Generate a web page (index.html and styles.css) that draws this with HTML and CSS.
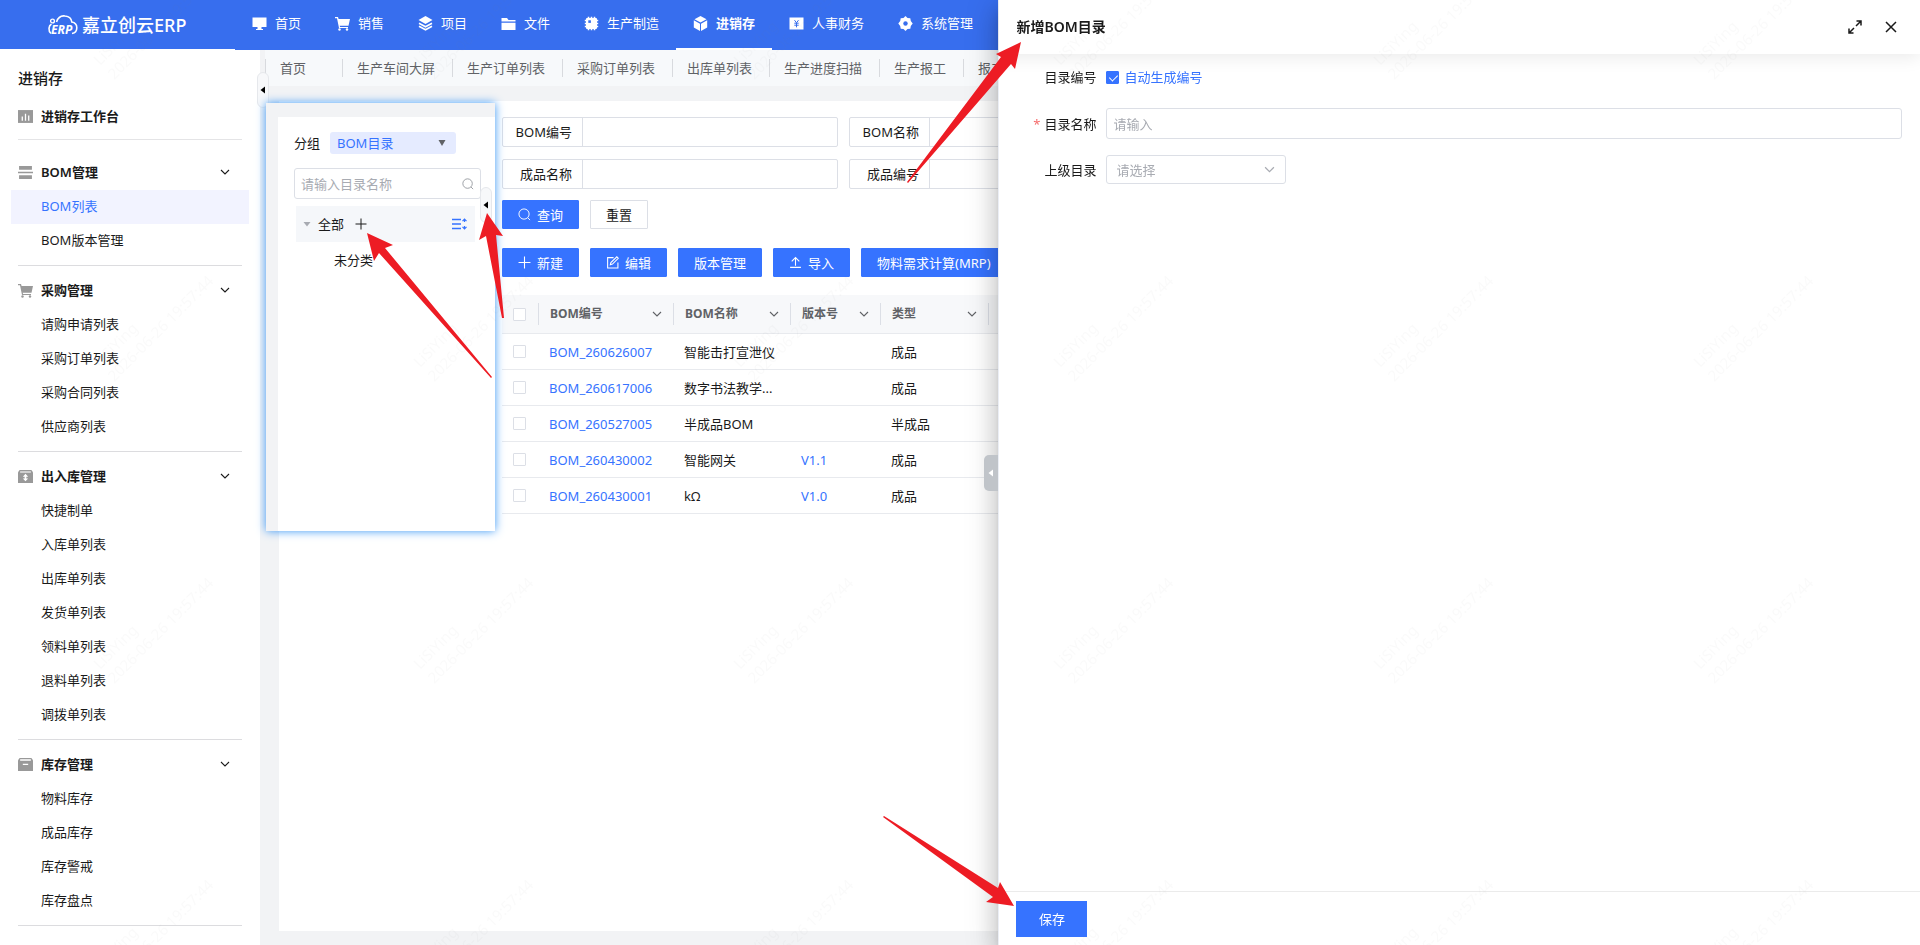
FILE: index.html
```html
<!DOCTYPE html>
<html lang="zh-CN">
<head>
    <meta charset="UTF-8">
    <meta name="viewport" content="width=device-width, initial-scale=1.0">
    <title>嘉立创云ERP</title>
    <link rel="stylesheet" href="styles.css">
</head>
<body>
<svg class="sprite" aria-hidden="true">
    <symbol id="i-down" viewBox="0 0 10 10"><path d="M1 3l4 4 4-4" fill="none" stroke="currentColor" stroke-width="1.1"/></symbol>
    <symbol id="i-search" viewBox="0 0 14 14"><circle cx="6.5" cy="6.5" r="5.5" fill="none" stroke="currentColor"/><path d="M10.500 10.500l2.500 2.500" stroke="currentColor"/></symbol>
    <symbol id="i-cart" viewBox="0 0 15 15"><path d="M0 1h3l.6 2H15l-1.500 6.800H4.700l.4 1.200H13v1H4L2 2.200H0z" fill="currentColor"/><circle cx="4.500" cy="13.500" r="1.200" fill="currentColor"/><circle cx="12" cy="13.500" r="1.200" fill="currentColor"/></symbol>
    <symbol id="i-left" viewBox="0 0 6 8"><path d="M5 0.500v7L0.500 4z" fill="currentColor"/></symbol>
</svg>

<header class="header">
    <div class="brand">
        <svg class="brand-logo" width="30" height="22" viewBox="0 0 30 22" aria-hidden="true">
            <path d="M3 19.500C0 17 .5 11.500 3.500 10M8.500 8C10 3.500 13.500 1.500 17 2c4 .4 6.500 3 6.800 6 3.200.6 5 3 5 5.700 0 3-2 5.300-4.800 5.800" fill="none" stroke="#fff" stroke-width="1.600"/>
            <circle cx="4.500" cy="7" r="1.900" fill="none" stroke="#fff" stroke-width="1.400"/>
            <text x="3" y="20" font-size="12" font-weight="700" font-style="italic" fill="#fff">ERP</text>
        </svg>
        <span class="brand-name">嘉立创云ERP</span>
    </div>
    <nav class="nav">
        <a href="#"><svg viewBox="0 0 15 15"><path d="M.5 1.500h14V11H.5zM5.500 11h4v2h1.500v1H4v-1h1.500z" fill="currentColor"/></svg>首页</a>
        <a href="#"><svg viewBox="0 0 15 15"><use href="#i-cart"/></svg>销售</a>
        <a href="#"><svg viewBox="0 0 15 15"><path d="M7.500 0l7 4-7 4-7-4z" fill="currentColor"/><path d="M1 7.200l6.500 3.600L14 7.200M1 10.200l6.500 3.600 6.500-3.600" fill="none" stroke="currentColor" stroke-width="1.600"/></svg>项目</a>
        <a href="#"><svg viewBox="0 0 15 15"><path d="M.5 2h5.500l1.500 2h7v1.500H.5zM.5 6.800h14V14H.5z" fill="currentColor"/></svg>文件</a>
        <a href="#"><svg viewBox="0 0 15 15"><rect x="2" y="2" width="11" height="11" rx="1" fill="currentColor"/><path d="M4.500 .8v13.400M7.500 .8v13.400M10.500 .8v13.400M.8 4.500h13.400M.8 7.500h13.400M.8 10.500h13.400" stroke="currentColor" stroke-width="1.600"/><rect x="4.300" y="4.300" width="2.600" height="2.600" fill="#376eee"/></svg>生产制造</a>
        <a href="#" class="active"><svg viewBox="0 0 15 15"><path d="M7.500 0l6 3.200-6 3.300-6-3.300zM.8 4.300L7 7.700V15L.8 11.600zM14.200 4.300L8 7.700V15l6.200-3.400z" fill="currentColor"/></svg>进销存</a>
        <a href="#"><svg viewBox="0 0 15 15"><rect x=".5" y="1.500" width="14" height="12" fill="currentColor"/><path d="M5.500 4.200l2 2.600 2-2.600M5.300 7.200h4.400M5.300 9.200h4.400M7.500 6.800v4.500" fill="none" stroke="#376eee"/></svg>人事财务</a>
        <a href="#"><svg viewBox="0 0 15 15"><path d="M7.500 0l2 2 2.800.2.500 2.800 1.900 2.500-1.900 2.500-.5 2.800-2.800.2-2 2-2-2-2.800-.2L2.200 10 .3 7.500 2.200 5l.5-2.800L5.500 2z" fill="currentColor"/><circle cx="7.500" cy="7.500" r="2.200" fill="#376eee"/></svg>系统管理</a>
    </nav>
</header>

<div class="layout">
    <aside class="sidebar">
        <h2>进销存</h2>
        <a href="#" class="workbench">
            <svg class="menu-icon" viewBox="0 0 14 14"><rect y="1" width="14" height="12" fill="currentColor"/><path d="M4 7v4M7 4.500V11M10 6v5" stroke="#fff" stroke-width="1.200"/></svg>进销存工作台
        </a>
        <section class="menu-group first">
            <button class="menu-title"><svg class="menu-icon" viewBox="0 0 14 14"><path d="M1 1h12v3.500H1zM0 6.300h14v1.400H0zM1 9.500h12V13H1z" fill="currentColor"/></svg>BOM管理<svg class="chevron"><use href="#i-down"/></svg></button>
            <a href="#" class="active">BOM列表</a>
            <a href="#">BOM版本管理</a>
        </section>
        <section class="menu-group">
            <button class="menu-title"><svg class="menu-icon"><use href="#i-cart"/></svg>采购管理<svg class="chevron"><use href="#i-down"/></svg></button>
            <a href="#">请购申请列表</a>
            <a href="#">采购订单列表</a>
            <a href="#">采购合同列表</a>
            <a href="#">供应商列表</a>
        </section>
        <section class="menu-group">
            <button class="menu-title"><svg class="menu-icon" viewBox="0 0 14 14"><path d="M1.500 1h11L14 3v10H0V3z" fill="currentColor"/><path d="M2 2.800h10" stroke="#fff"/><path d="M7 4.500l2.500 2.700h-1.700v1.600h1.700L7 11.500 4.500 8.800h1.700V7.200H4.500z" fill="#fff"/></svg>出入库管理<svg class="chevron"><use href="#i-down"/></svg></button>
            <a href="#">快捷制单</a>
            <a href="#">入库单列表</a>
            <a href="#">出库单列表</a>
            <a href="#">发货单列表</a>
            <a href="#">领料单列表</a>
            <a href="#">退料单列表</a>
            <a href="#">调拨单列表</a>
        </section>
        <section class="menu-group">
            <button class="menu-title"><svg class="menu-icon" viewBox="0 0 14 14"><path d="M1.500 1h11L14 3v10H0V3z" fill="currentColor"/><path d="M2 2.800h10M4.500 6.800h5" stroke="#fff" stroke-width="1.200"/></svg>库存管理<svg class="chevron"><use href="#i-down"/></svg></button>
            <a href="#">物料库存</a>
            <a href="#">成品库存</a>
            <a href="#">库存警戒</a>
            <a href="#">库存盘点</a>
        </section>
    </aside>

    <div class="page">
        <button class="handle sidebar-handle" aria-label="收起菜单"><svg><use href="#i-left"/></svg></button>
        <nav class="tabs">
            <a href="#" class="home">首页</a>
            <a href="#">生产车间大屏</a>
            <a href="#">生产订单列表</a>
            <a href="#">采购订单列表</a>
            <a href="#">出库单列表</a>
            <a href="#">生产进度扫描</a>
            <a href="#">生产报工</a>
            <a href="#">报工列表</a>
        </nav>
        <main class="card">
            <form class="filters">
                <label class="filter"><span>BOM编号</span><input type="text"></label>
                <label class="filter"><span>BOM名称</span><input type="text"></label>
                <label class="filter second-row"><span>成品名称</span><input type="text"></label>
                <label class="filter"><span>成品编号</span><input type="text"></label>
            </form>
            <div class="buttons query">
                <button class="btn primary"><svg><use href="#i-search"/></svg>查询</button>
                <button class="btn">重置</button>
            </div>
            <div class="buttons actions">
                <button class="btn primary"><svg viewBox="0 0 12 12"><path d="M6 .5v11M.5 6h11" stroke="currentColor"/></svg>新建</button>
                <button class="btn primary"><svg viewBox="0 0 12 12"><path d="M7 1.500H1.500v9.500H11V6M4 8l.5-2L10 .8l1.300 1.300L6 7.500z" fill="none" stroke="currentColor"/></svg>编辑</button>
                <button class="btn primary">版本管理</button>
                <button class="btn primary"><svg viewBox="0 0 12 12"><path d="M6 9V1.500M2.500 5L6 1.500 9.500 5M1 10.500h10" fill="none" stroke="currentColor"/></svg>导入</button>
                <button class="btn primary">物料需求计算(MRP)</button>
            </div>
            <table class="bom-table">
                <colgroup><col class="c-check"><col class="c-code"><col class="c-name"><col class="c-version"><col class="c-type"><col></colgroup>
                <thead>
                    <tr>
                        <th><div><input type="checkbox" aria-label="全选"></div></th>
                        <th><div>BOM编号<svg class="chevron"><use href="#i-down"/></svg></div></th>
                        <th><div>BOM名称<svg class="chevron"><use href="#i-down"/></svg></div></th>
                        <th><div>版本号<svg class="chevron"><use href="#i-down"/></svg></div></th>
                        <th><div>类型<svg class="chevron"><use href="#i-down"/></svg></div></th>
                        <th></th>
                    </tr>
                </thead>
                <tbody>
                    <tr><td><input type="checkbox" aria-label="选择 BOM_260626007"></td><td><a href="#">BOM_260626007</a></td><td>智能击打宣泄仪</td><td></td><td>成品</td><td></td></tr>
                    <tr><td><input type="checkbox" aria-label="选择 BOM_260617006"></td><td><a href="#">BOM_260617006</a></td><td>数字书法教学...</td><td></td><td>成品</td><td></td></tr>
                    <tr><td><input type="checkbox" aria-label="选择 BOM_260527005"></td><td><a href="#">BOM_260527005</a></td><td>半成品BOM</td><td></td><td>半成品</td><td></td></tr>
                    <tr><td><input type="checkbox" aria-label="选择 BOM_260430002"></td><td><a href="#">BOM_260430002</a></td><td>智能网关</td><td><a href="#">V1.1</a></td><td>成品</td><td></td></tr>
                    <tr><td><input type="checkbox" aria-label="选择 BOM_260430001"></td><td><a href="#">BOM_260430001</a></td><td>kΩ</td><td><a href="#">V1.0</a></td><td>成品</td><td></td></tr>
                </tbody>
            </table>
        </main>

        <!-- highlighted group panel, floats over the card -->
        <aside class="spotlight">
            <div class="group-panel">
                <div class="group-row">
                    <label for="group">分组</label>
                    <div class="group-select">
                        <select id="group"><option>BOM目录</option></select>
                        <svg viewBox="0 0 8 6"><path d="M.5 0h7L4 6z" fill="currentColor"/></svg>
                    </div>
                </div>
                <div class="search-box">
                    <input type="text" placeholder="请输入目录名称" aria-label="目录名称">
                    <svg><use href="#i-search"/></svg>
                </div>
                <div class="tree-root">
                    <svg class="caret" viewBox="0 0 8 5"><path d="M.5 0h7L4 4.500z" fill="currentColor"/></svg>
                    <span>全部</span>
                    <button class="icon-btn" aria-label="新增目录"><svg viewBox="0 0 12 12"><path d="M6 .5v11M.5 6h11" stroke="currentColor"/></svg></button>
                    <button class="icon-btn sort" aria-label="排序"><svg viewBox="0 0 15 12"><path d="M0 1.500h9M0 6h9M0 10.500h9" stroke="currentColor" stroke-width="1.500"/><path d="M10.500 3.200l2-2 2 2M12.500 1.500V4M10.500 8.800l2 2 2-2M12.500 10.500V8" fill="none" stroke="currentColor" stroke-width="1.200"/></svg></button>
                </div>
                <a href="#" class="tree-leaf">未分类</a>
            </div>
            <button class="handle panel-handle" aria-label="收起分组"><svg><use href="#i-left"/></svg></button>
        </aside>
    </div>
</div>

<section class="drawer" role="dialog" aria-label="新增BOM目录">
    <button class="drawer-toggle" aria-label="展开"><svg><use href="#i-left"/></svg></button>
    <header class="drawer-header">
        <h3>新增BOM目录</h3>
        <button class="icon-btn" aria-label="全屏"><svg width="14" height="14" viewBox="0 0 14 14"><path d="M8.500 1H13v4.500M13 1L8 6M1 8.500V13h4.500M1 13l5-5" fill="none" stroke="currentColor" stroke-width="1.500"/></svg></button>
        <button class="icon-btn" aria-label="关闭"><svg width="12" height="12" viewBox="0 0 12 12"><path d="M1 1l10 10M11 1L1 11" stroke="currentColor" stroke-width="1.500"/></svg></button>
    </header>
    <form class="drawer-body">
        <span class="form-label">目录编号</span>
        <label class="auto-code"><input type="checkbox" checked>自动生成编号</label>
        <label class="form-label required" for="dir-name">目录名称</label>
        <input class="text-input" id="dir-name" type="text" placeholder="请输入">
        <label class="form-label" for="parent-dir">上级目录</label>
        <div class="parent-select">
            <select id="parent-dir"><option>请选择</option></select>
            <svg><use href="#i-down"/></svg>
        </div>
    </form>
    <footer class="drawer-footer">
        <button class="save">保存</button>
    </footer>
</section>

<svg class="overlay" aria-hidden="true">
    <defs>
        <pattern id="mark" x="80" y="-50" width="320" height="302" patternUnits="userSpaceOnUse">
            <g transform="translate(20 116) rotate(-45)" font-size="15" fill="#808080" fill-opacity="0.04">
                <text>LiSiYing</text>
                <text y="20">2026-06-26 19:57:44</text>
            </g>
        </pattern>
    </defs>
    <rect width="100%" height="100%" fill="url(#mark)"/>
    <g fill="#ed1c24">
        <polygon points="1021,42 1015,69 1011,64 908,183 907,182 1001,57 996,54"/>
        <polygon points="367,233 393,245 385,248 492,377 491,378 379,253 374,261"/>
        <polygon points="487,213 503,236 496,235 504,318 502,318 486,236 479,240"/>
        <polygon points="1014,906 986,902 993,897 883,817 884,816 998,888 1000,882"/>
    </g>
</svg>
</body>
</html>
```

FILE: styles.css
```css
* {
    box-sizing: border-box;
}

body {
    margin: 0;
    height: 100vh;
    overflow: hidden;
    display: flex;
    flex-direction: column;
    font-family: "Noto Sans", "Noto Sans CJK SC", sans-serif;
    font-size: 13px;
    line-height: 18px;
    color: #1a1a1a;
    background: #fff;
}

a {
    color: inherit;
    text-decoration: none;
}

button,
input,
select {
    font: inherit;
    color: inherit;
    margin: 0;
}

button {
    padding: 0;
    border: none;
    background: none;
    cursor: pointer;
}

input::placeholder {
    color: #a8abb2;
    opacity: 1;
}

input[type="checkbox"] {
    appearance: none;
    display: block;
    width: 13px;
    height: 13px;
    border: 1px solid #dcdfe6;
    border-radius: 1px;
    background: #fff;
}

.sprite {
    position: absolute;
    width: 0;
    height: 0;
}

.chevron {
    width: 10px;
    height: 10px;
    margin-left: auto;
}

/* header */
.header {
    flex: none;
    display: flex;
    height: 50px;
    background: #376eee;
    color: #fff;
}

.brand {
    width: 235px;
    display: flex;
    align-items: center;
    gap: 4px;
    padding-left: 48px;
    border-bottom: 1px solid #fff;
}

.brand-logo {
    overflow: visible;
}

.brand-name {
    font-size: 18px;
    font-weight: 500;
    line-height: 24px;
}

.nav {
    display: flex;
}

.nav a {
    display: flex;
    align-items: center;
    gap: 8px;
    padding: 0 17px 2px;
    border-bottom: 2px solid transparent;
}

.nav svg {
    width: 15px;
    height: 15px;
}

.nav .active {
    font-weight: 700;
    border-bottom-color: #fff;
}

.layout {
    flex: 1;
    min-height: 0;
    display: flex;
}

/* sidebar */
.sidebar {
    width: 260px;
    flex: none;
    padding: 18px 18px 0;
}

.sidebar h2 {
    margin: 0;
    font-size: 15px;
    font-weight: 500;
    line-height: 20px;
}

.workbench,
.menu-title {
    display: flex;
    align-items: center;
    gap: 8px;
    height: 34px;
    font-weight: 600;
}

.workbench {
    margin-top: 11px;
}

.menu-icon {
    width: 15px;
    height: 15px;
    color: #999;
}

.menu-group {
    padding: 8px 0 7px;
    border-bottom: 1px solid #dcdcdf;
}

.menu-group.first {
    margin-top: 6px;
    padding-top: 16px;
    border-top: 1px solid #e4e4e6;
}

.menu-title {
    width: 100%;
    padding: 0 12px 2px 0;
}

.menu-group a {
    display: block;
    height: 34px;
    margin: 0 -7px;
    padding-left: 30px;
    line-height: 32px;
}

.menu-group .active {
    background: #f2f3ff;
    color: #3673ff;
}

/* page */
.page {
    position: relative;
    flex: 1;
    min-width: 0;
    display: flex;
    flex-direction: column;
    background: #f2f3f5;
}

.tabs {
    display: flex;
    align-items: center;
    height: 36px;
    margin-left: 5px;
    background: #f7f9fb;
    color: #606266;
    white-space: nowrap;
    overflow: hidden;
}

.tabs a {
    padding: 0 17px 0 14px;
    border-left: 1px solid #d8dade;
}

.tabs .home {
    min-width: 77px;
}

.card {
    flex: 1;
    margin: 15px 17px 14px 19px;
    padding: 16px 24px 16px 223px;
    background: #fff;
    overflow: hidden;
}

.handle {
    position: absolute;
    width: 12px;
    height: 36px;
    border: 1px solid #e6e8ec;
    border-radius: 6px;
    background: #f7f8fa;
    color: #000;
    display: flex;
    align-items: center;
    justify-content: center;
}

.handle svg {
    width: 6px;
    height: 8px;
}

.sidebar-handle {
    left: -3px;
    top: 22px;
}

.filters {
    display: grid;
    grid-template-columns: repeat(4, 1fr);
    gap: 12px 11px;
}

.filter {
    display: flex;
    height: 30px;
    border: 1px solid #dcdfe6;
    border-radius: 2px;
}

.filter.second-row {
    grid-column-start: 1;
}

.filter span {
    width: 80px;
    padding-right: 10px;
    border-right: 1px solid #dcdfe6;
    line-height: 28px;
    text-align: right;
}

.filter input {
    flex: 1;
    min-width: 0;
    border: none;
    outline: none;
    background: none;
}

.buttons {
    display: flex;
    gap: 11px;
}

.query {
    margin-top: 11px;
}

.actions {
    margin-top: 19px;
}

.btn {
    display: flex;
    align-items: center;
    gap: 6px;
    height: 29px;
    padding: 0 15px;
    border: 1px solid #dcdfe6;
    border-radius: 1px;
    white-space: nowrap;
}

.btn.primary {
    border-color: #3673ff;
    background: #3673ff;
    color: #fff;
}

.btn svg {
    width: 13px;
    height: 13px;
}

/* table */
.bom-table {
    width: 100%;
    margin-top: 18px;
    table-layout: fixed;
    border-collapse: separate;
    border-spacing: 0;
}

.c-check {
    width: 37px;
}

.c-code {
    width: 135px;
}

.c-name {
    width: 117px;
}

.c-version {
    width: 90px;
}

.c-type {
    width: 108px;
}

.bom-table th {
    height: 39px;
    padding: 0;
    border-bottom: 1px solid #e8eaee;
    background: #f7f8fa;
    color: #606266;
    font-size: 12px;
    font-weight: 700;
    text-align: left;
}

.bom-table th div {
    display: flex;
    align-items: center;
    height: 22px;
    padding: 0 11px;
    border-right: 1px solid #dcdfe6;
}

.bom-table td {
    height: 36px;
    padding: 0 10px;
    border-bottom: 1px solid #e8eaee;
    white-space: nowrap;
}

.bom-table td:first-child {
    padding-left: 11px;
}

.bom-table td a {
    color: #3673ff;
}

/* group panel */
.spotlight {
    position: absolute;
    left: 6px;
    top: 53px;
    width: 229px;
    height: 428px;
    padding: 14px 0 0 12px;
    background: #f2f3f5;
    box-shadow: 0 0 9px #3a97f5;
}

.group-panel {
    height: 100%;
    padding: 15px 14px 0 16px;
    background: #fff;
}

.group-row {
    display: flex;
    align-items: center;
    gap: 10px;
}

.group-select {
    position: relative;
    width: 126px;
}

.group-select select {
    display: block;
    appearance: none;
    width: 100%;
    height: 22px;
    padding: 0 7px;
    border: none;
    border-radius: 3px;
    background: #e5ebff;
    color: #3673ff;
}

.group-select svg {
    position: absolute;
    right: 10px;
    top: 8px;
    width: 8px;
    height: 6px;
    color: #606266;
}

.search-box {
    display: flex;
    align-items: center;
    height: 31px;
    margin-top: 14px;
    padding: 0 6px;
    border: 1px solid #dcdfe6;
    border-radius: 3px;
}

.search-box input {
    flex: 1;
    min-width: 0;
    padding: 0;
    border: none;
    outline: none;
}

.search-box svg {
    width: 12px;
    height: 12px;
    color: #8f9298;
}

.tree-root {
    display: flex;
    align-items: center;
    height: 36px;
    margin: 7px 6px 0 2px;
    padding: 0 8px 0 7px;
    background: #f5f7fa;
}

.tree-root .caret {
    width: 8px;
    height: 5px;
    margin-right: 7px;
    color: #a8abb2;
}

.icon-btn {
    display: flex;
}

.tree-root .icon-btn {
    margin-left: 11px;
}

.tree-root .icon-btn svg {
    width: 12px;
    height: 12px;
}

.tree-root .sort {
    margin-left: auto;
    color: #3673ff;
}

.tree-root .sort svg {
    width: 15px;
}

.tree-leaf {
    display: block;
    padding-left: 40px;
    line-height: 36px;
}

.panel-handle {
    right: 3px;
    top: 84px;
}

/* drawer */
.drawer {
    position: fixed;
    top: 0;
    right: 0;
    bottom: 0;
    width: 48%;
    display: flex;
    flex-direction: column;
    border-left: 1px solid #ebeef5;
    background: #fff;
    box-shadow: 0 8px 10px -5px rgba(0, 0, 0, 0.2), 0 16px 24px 2px rgba(0, 0, 0, 0.14), 0 6px 30px 5px rgba(0, 0, 0, 0.12);
}

.drawer-toggle {
    position: absolute;
    left: -15px;
    top: 455px;
    width: 14px;
    height: 36px;
    display: flex;
    align-items: center;
    justify-content: center;
    border-radius: 5px 0 0 5px;
    background: #c0c4c9;
    color: #fff;
}

.drawer-toggle svg {
    width: 6px;
    height: 8px;
}

.drawer-header {
    display: flex;
    align-items: center;
    gap: 23px;
    height: 54px;
    padding: 0 23px 0 17px;
    box-shadow: 0 4px 16px rgba(0, 0, 0, 0.08);
}

.drawer-header h3 {
    flex: 1;
    margin: 0;
    font-size: 14px;
    font-weight: 600;
}

.drawer-body {
    flex: 1;
    display: grid;
    grid-template-columns: 80px 1fr;
    grid-template-rows: 30px 31px 29px;
    gap: 16px 10px;
    align-content: start;
    align-items: center;
    padding: 8px 18px 0 17px;
}

.drawer-body .text-input {
    height: 31px;
    padding: 0 6px;
    border: 1px solid #dcdfe6;
    border-radius: 3px;
    outline: none;
}

.form-label {
    text-align: right;
}

.required::before {
    content: "*";
    margin-right: 4px;
    color: #f56c6c;
}

.auto-code {
    display: flex;
    align-items: center;
    gap: 5px;
    color: #3673ff;
}

.auto-code input:checked {
    border-color: #3673ff;
    background: #3673ff;
}

.auto-code input:checked::after {
    content: "";
    display: block;
    width: 4px;
    height: 7px;
    margin: 1px 0 0 4px;
    border: solid #fff;
    border-width: 0 1px 1px 0;
    transform: rotate(45deg);
}

.parent-select {
    position: relative;
    width: 180px;
}

.parent-select select {
    display: block;
    appearance: none;
    width: 100%;
    height: 29px;
    padding: 0 9px;
    border: 1px solid #dcdfe6;
    border-radius: 3px;
    background: #fff;
    color: #a8abb2;
}

.parent-select svg {
    position: absolute;
    right: 11px;
    top: 9px;
    width: 11px;
    height: 11px;
    color: #a8abb2;
}

.drawer-footer {
    padding: 9px 17px 8px;
    border-top: 1px solid #ebebeb;
}

.save {
    display: block;
    width: 71px;
    height: 36px;
    background: #3673ff;
    color: #fff;
}

/* watermark and pointer arrows */
.overlay {
    position: fixed;
    inset: 0;
    width: 100%;
    height: 100%;
    pointer-events: none;
}
```
